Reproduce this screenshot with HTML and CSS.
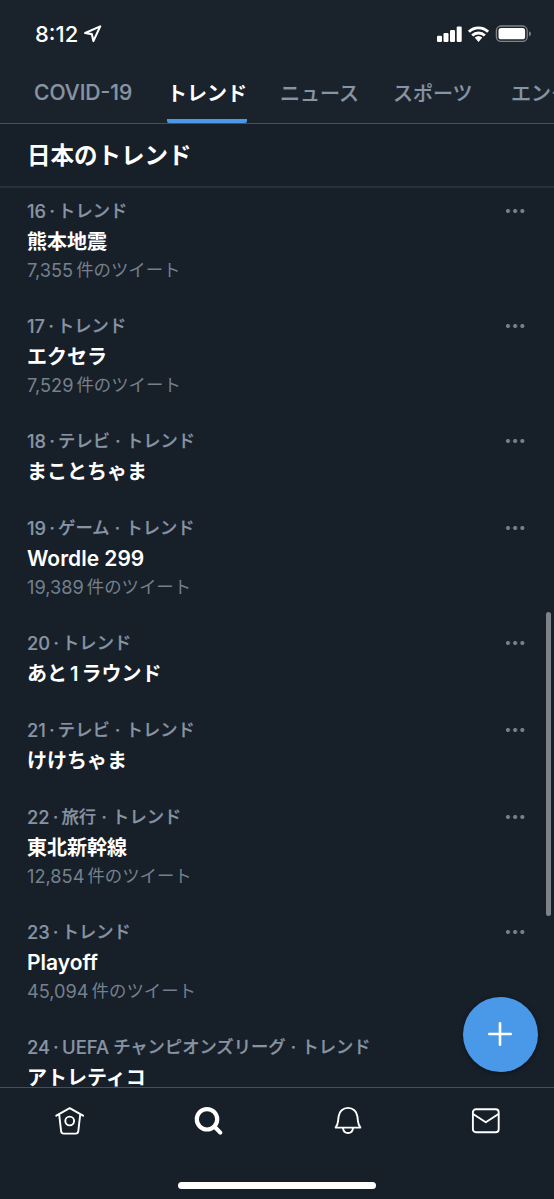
FILE: index.html
```html
<!DOCTYPE html>
<html lang="ja">
<head>
<meta charset="utf-8">
<title>トレンド</title>
<link rel="stylesheet" href="styles.css">
</head>
<body>
<div class="app">
  <header class="header">
    <div class="status">
      <span class="time">8:12</span>
      <svg class="loc" width="18" height="18" viewBox="0 0 18 18"><path d="M16.200 1.400 1.200 8l6.600 1.100 1.600 7z" fill="none" stroke="#fff" stroke-width="2.100" stroke-linejoin="round"/></svg>
      <svg class="signals" width="96" height="20" viewBox="0 0 96 20">
        <g fill="#fff"><rect x="1" y="11.700" width="5" height="6.300" rx="1.200"/><rect x="7.500" y="9" width="5" height="9" rx="1.200"/><rect x="14" y="6" width="5" height="12" rx="1.200"/><rect x="20.700" y="2.400" width="5" height="15.600" rx="1.200"/><path d="M38.700 13.600 42.500 17.900l3.800-4.300a5.900 5.900 0 0 0-7.600 0z"/></g>
        <g fill="none" stroke="#fff" stroke-width="2.900"><path d="M32.900 7.800a13.700 13.700 0 0 1 19.200 0"/><path d="M36.200 11.500a9 9 0 0 1 12.600 0"/></g>
        <rect x="60.400" y="2" width="30.800" height="15.400" rx="4.600" fill="none" stroke="#7f858b" stroke-width="1.300"/>
        <rect x="62.500" y="4.100" width="26.600" height="11.200" rx="2.600" fill="#fff"/><path d="M93 7.300q2 .8 2 2.500t-2 2.500z" fill="#7f858b"/>
      </svg>
    </div>
    <nav class="tabs">
      <span class="tab tab-latin">COVID-19</span><span class="tab active">トレンド</span><span class="tab">ニュース</span><span class="tab">スポーツ</span><span class="tab tab-last">エンタメ</span>
    </nav>
  </header>
  <h1 class="heading">日本のトレンド</h1>
  <main class="list">
    <article class="item"><div class="meta"><b>16</b><i>·</i>トレンド<span class="more"></span></div><div class="title">熊本地震</div><div class="count"><b>7,355</b>件のツイート</div></article>
    <article class="item"><div class="meta"><b>17</b><i>·</i>トレンド<span class="more"></span></div><div class="title">エクセラ</div><div class="count"><b>7,529</b>件のツイート</div></article>
    <article class="item"><div class="meta"><b>18</b><i>·</i>テレビ<i class="wide">·</i>トレンド<span class="more"></span></div><div class="title">まことちゃま</div></article>
    <article class="item"><div class="meta"><b>19</b><i>·</i>ゲーム<i class="wide">·</i>トレンド<span class="more"></span></div><div class="title latin">Wordle 299</div><div class="count"><b>19,389</b>件のツイート</div></article>
    <article class="item"><div class="meta"><b>20</b><i>·</i>トレンド<span class="more"></span></div><div class="title">あと<span class="one">1</span>ラウンド</div></article>
    <article class="item"><div class="meta"><b>21</b><i>·</i>テレビ<i class="wide">·</i>トレンド<span class="more"></span></div><div class="title">けけちゃま</div></article>
    <article class="item"><div class="meta"><b>22</b><i>·</i>旅行<i class="wide">·</i>トレンド<span class="more"></span></div><div class="title">東北新幹線</div><div class="count"><b>12,854</b>件のツイート</div></article>
    <article class="item"><div class="meta"><b>23</b><i>·</i>トレンド<span class="more"></span></div><div class="title latin">Playoff</div><div class="count"><b>45,094</b>件のツイート</div></article>
    <article class="item"><div class="meta"><b>24</b><i>·</i><b class="league">UEFA</b>チャンピオンズリーグ<i class="wide">·</i>トレンド</div><div class="title">アトレティコ</div></article>
  </main>
  <div class="scrollbar"></div>
  <button class="compose" aria-label="ツイートする"><svg width="24" height="24" viewBox="0 0 24 24"><path d="M12 1.300v21.400M1.300 12h21.400" stroke="#fff" stroke-width="2.600" stroke-linecap="round"/></svg></button>
  <footer class="bottom">
    <div class="icons">
      <svg width="32" height="32" viewBox="0 0 32 32" fill="none" stroke="#fff" stroke-width="1.900" stroke-linecap="round" stroke-linejoin="round"><path d="M2.300 10.700 15.700 3.200 29.100 10.700M5.200 9.600l1.900 16.600q.3 2.400 2.600 2.400h12q2.300 0 2.600-2.400l1.900-16.600"/><circle cx="15.700" cy="16" r="4.400"/></svg>
      <svg width="32" height="32" viewBox="0 0 32 32" fill="none" stroke="#fff" stroke-width="4.200" stroke-linecap="round"><circle cx="15" cy="14.300" r="10.200"/><path d="m22.800 22 5.500 5.600"/></svg>
      <svg width="32" height="32" viewBox="0 0 32 32" fill="none" stroke="#fff" stroke-width="1.900" stroke-linejoin="round"><path d="M4.600 22.600h24.800c-1.500-2-2.200-4-2.500-6.800l-.5-4.500C25.900 6.300 21.800 2.900 17 2.900s-8.900 3.400-9.400 8.400l-.5 4.500c-.3 2.800-1 4.800-2.500 6.800zM12 23c.3 3 2.300 5 5 5s4.700-2 5-5"/></svg>
      <svg width="32" height="32" viewBox="0 0 32 32" fill="none" stroke="#fff" stroke-width="1.900" stroke-linejoin="round"><rect x="3.900" y="4.300" width="25.800" height="23" rx="3"/><path d="m4.100 9 12.700 8.300L29.500 9"/></svg>
    </div>
    <div class="home"></div>
  </footer>
</div>
</body>
</html>
```
FILE: styles.css
```css
* { box-sizing: border-box; }
body { margin: 0; background: #171f29; color: #fff; font-family: Inter, "Noto Sans CJK JP", sans-serif; }
.app { position: relative; width: 554px; height: 1199px; overflow: hidden; display: flex; flex-direction: column; }
.header { height: 124px; flex: none; background: #1a222c; border-bottom: 1px solid #47505a; display: flex; flex-direction: column; }
.status { height: 67px; flex: none; padding: 1px 22px 0 35px; display: flex; align-items: center; }
.time { font-size: 22px; font-weight: 500; width: 49px; white-space: nowrap; }
.loc { display: block; }
.signals { margin-left: auto; }
.tabs { flex: 1; padding-left: 34px; display: flex; white-space: nowrap; overflow: hidden; }
.tab { flex: none; width: 80px; margin-right: 33px; padding-top: 1px; font-size: 20px; line-height: 52px; font-weight: 500; color: #8794a3; -webkit-text-stroke: 0.2px; }
.tab-latin { width: 100px; font-size: 21px; padding-top: 0; }
.tab-last { margin-left: 5px; }
.active { color: #fff; font-weight: 700; border-bottom: 4px solid #4a99e9; border-radius: 2px; -webkit-text-stroke: 0; }
.heading { margin: 0; height: 64px; flex: none; padding: 1px 0 0 27px; border-bottom: 2px solid #27303b; font-size: 23.5px; line-height: 62px; font-weight: 700; }
.list { flex: 1; min-height: 0; overflow: hidden; }
.item { padding: 10px 29px 18px 27px; white-space: nowrap; }
.meta { height: 28px; display: flex; align-items: center; font-size: 17.3px; line-height: 26px; padding-bottom: 2px; font-weight: 500; color: #8794a3; -webkit-text-stroke: 0.25px; }
.meta b { font-size: 18.3px; font-weight: 500; -webkit-text-stroke: 0.15px; }
.meta .league { font-size: 18.5px; padding-right: 4px; }
.meta i { font-style: normal; width: 12px; text-align: center; }
.meta .wide { width: 16px; }
.title { height: 31px; line-height: 32px; font-size: 20px; font-weight: 600; }
.latin { font-size: 21px; line-height: 31px; }
.one { padding: 0 3px; }
.count { height: 28px; display: flex; align-items: center; font-size: 17.4px; line-height: 26px; padding-bottom: 2px; color: #75808d; }
.count b { font-size: 18.2px; font-weight: 400; padding-right: 3px; }
.more { margin-left: auto; width: 19px; height: 4px; background: radial-gradient(circle at 2px 2px, #75808d 1.7px, transparent 2.3px) 0 0 / 7.2px 4px; }
.scrollbar { position: absolute; left: 546px; top: 612px; width: 5px; height: 304px; border-radius: 3px; background: #7d8389; }
.compose { position: absolute; left: 463px; top: 997px; width: 75px; height: 75px; padding: 0 1px 1px 0; border: 0; border-radius: 50%; background: #4a99e9; box-shadow: 0 1px 5px #0006; display: flex; align-items: center; justify-content: center; }
.bottom { flex: none; height: 112px; border-top: 1px solid #47505a; background: #171f29; }
.icons { height: 94px; padding: 17px 53px 0 54px; display: flex; justify-content: space-between; align-items: flex-start; }
.home { margin: 0 auto; width: 198px; height: 7px; border-radius: 4px; background: #fff; }
```
